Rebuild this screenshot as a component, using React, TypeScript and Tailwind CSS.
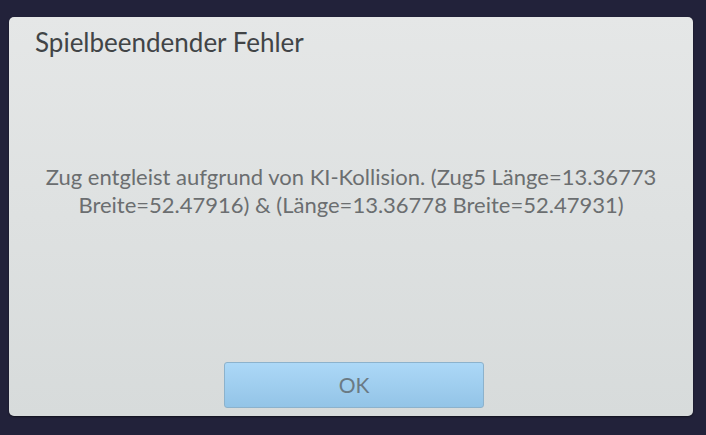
export default function App() {
  return (
    <div className="w-[706px] h-[435px] overflow-hidden bg-[#22223a] pt-[17px] pl-[9px] pr-[13px] pb-[19px] flex">
      <div
        className="flex-1 flex flex-col rounded-[5px] bg-gradient-to-b from-[#e5e7e7] to-[#d7dbdb] shadow-[0_1px_2px_rgba(0,0,0,0.5)]"
        style={{ fontFamily: 'Lato, "DejaVu Sans", sans-serif' }}
      >
        <div className="px-[26px] pt-[10px] text-[26px] leading-[30px] text-[#414446]">
          Spielbeendender Fehler
        </div>
        <div className="flex-1 flex items-center justify-center px-[20px] pb-[38px]">
          <p className="text-center text-[22px] leading-[28px] text-[#6b6e70] whitespace-nowrap">
            Zug entgleist aufgrund von KI-Kollision. (Zug5 Länge=13.36773
            <br />
            Breite=52.47916) &amp; (Länge=13.36778 Breite=52.47931)
          </p>
        </div>
        <div className="flex justify-center pb-[8px] pl-[6px]">
          <button className="w-[260px] h-[46px] rounded-[3px] border border-[#8cb2cc] bg-gradient-to-b from-[#acd8f7] to-[#93c4e7] text-[21px] text-[#6a7a84]">
            OK
          </button>
        </div>
      </div>
    </div>
  );
}
